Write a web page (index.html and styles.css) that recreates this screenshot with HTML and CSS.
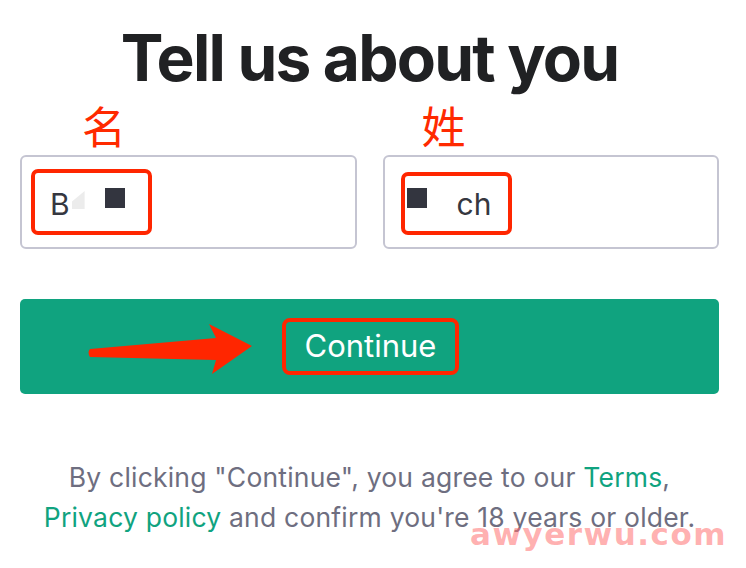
FILE: index.html
```html
<!DOCTYPE html>
<html lang="zh">
<head>
<meta charset="utf-8">
<title>Tell us about you</title>
<link rel="stylesheet" href="styles.css">
</head>
<body>
<main class="page">
  <h1 class="title">Tell us about you</h1>
  <div class="labels">
    <span class="label label-first">名</span>
    <span class="label label-last">姓</span>
  </div>
  <div class="fields">
    <div class="field">
      <div class="value value-first">B<span class="smudge"></span><span class="blot blot-first"></span></div>
      <span class="mark mark-first"></span>
    </div>
    <div class="field">
      <div class="value value-last"><span class="blot blot-last"></span><span class="ch">ch</span></div>
      <span class="mark mark-last"></span>
    </div>
  </div>
  <button class="continue" type="button">
    <svg class="arrow" width="170" height="54" viewBox="0 0 170 54" aria-hidden="true">
      <path d="M3 26 Q0 29 3 34 L129 37 L125 51 L165 23 L122 1 L129 15 Z" fill="#ff2600"/>
    </svg>
    <span class="continue-label">Continue</span>
  </button>
  <p class="legal">By clicking "Continue", you agree to our <a href="#">Terms</a>,<br><a href="#">Privacy policy</a> and confirm you're 18 years or older.</p>
  <div class="watermark">awyerwu.com</div>
</main>
</body>
</html>
```
FILE: styles.css
```css
* { box-sizing: border-box; }
html, body { margin: 0; background: #fff; }
body {
  font-family: Inter, "Noto Sans", "Liberation Sans", "Noto Sans CJK SC", sans-serif;
  color: #202123;
}
.page {
  position: relative;
  width: 746px;
  height: 568px;
  padding: 0 27px 0 20px;
  overflow: hidden;
}
.title {
  margin: 0;
  padding-top: 23px;
  height: 100px;
  font-size: 64px;
  line-height: 70px;
  font-weight: 700;
  letter-spacing: -1.8px;
  text-align: center;
  color: #202123;
}
.labels {
  display: grid;
  grid-template-columns: 1fr 1fr;
  column-gap: 26px;
  height: 55px;
}
.label {
  font-family: "Noto Sans CJK SC", sans-serif;
  font-size: 44px;
  line-height: 50px;
  color: #ff2a00;
  font-weight: 400;
}
.label-first { padding-left: 62px; }
.label-last { padding-left: 39px; }
.fields {
  display: grid;
  grid-template-columns: 1fr 1fr;
  column-gap: 26px;
}
.field {
  position: relative;
  height: 94px;
  border: 2px solid #c5c5d2;
  border-radius: 6px;
  display: flex;
  align-items: center;
}
.value {
  display: flex;
  align-items: center;
  font-size: 30px;
  color: #353740;
  padding-top: 4px;
}
.value-first { padding-left: 28px; }
.value-last { padding-left: 22px; }
.smudge {
  width: 13px;
  height: 18px;
  margin-left: 2px;
  margin-top: -8px;
  background: #ececec;
  clip-path: polygon(100% 0, 100% 100%, 0 100%, 0 60%);
}
.blot {
  width: 20px;
  height: 20px;
  background: #33353f;
  margin-top: -12px;
}
.blot-first { margin-left: 20px; }
.ch { margin-left: 30px; }
.mark {
  position: absolute;
  border: 4px solid #ff2600;
  border-radius: 7px;
}
.mark-first { left: 9px; top: 12px; width: 121px; height: 66px; }
.mark-last { left: 16px; top: 15px; width: 111px; height: 63px; }
.continue {
  position: relative;
  display: flex;
  align-items: center;
  justify-content: center;
  width: 699px;
  height: 95px;
  margin-top: 50px;
  border: none;
  border-radius: 5px;
  background: #10a37f;
  color: #fff;
  font-family: inherit;
  font-size: 31px;
  padding: 0;
}
.continue-label {
  padding: 8px 19px 9px;
  border: 4px solid #ff2600;
  border-radius: 8px;
  line-height: 32px;
  margin-left: 2px;
}
.arrow {
  position: absolute;
  left: 67px;
  top: 24px;
}
.legal {
  margin: 63px 0 0;
  font-size: 26.5px;
  line-height: 40px;
  letter-spacing: 0.2px;
  color: #6e6e80;
  text-align: center;
}
.legal a { color: #10a37f; text-decoration: none; }
.watermark {
  position: absolute;
  left: 470px;
  top: 519px;
  font-family: "DejaVu Sans", sans-serif;
  font-weight: 700;
  font-size: 31px;
  line-height: 31px;
  letter-spacing: 1.5px;
  color: rgba(255, 110, 110, 0.55);
}
```
